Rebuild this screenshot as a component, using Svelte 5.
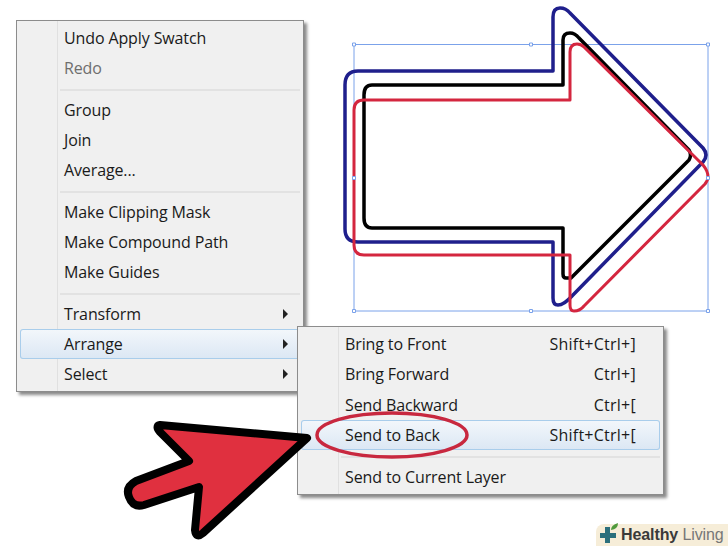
<script>
    const menu = [
        [{ label: 'Undo Apply Swatch' }, { label: 'Redo', off: true }],
        [{ label: 'Group' }, { label: 'Join' }, { label: 'Average...' }],
        [{ label: 'Make Clipping Mask' }, { label: 'Make Compound Path' }, { label: 'Make Guides' }],
        [{ label: 'Transform', sub: true }, { label: 'Arrange', sub: true, active: true }, { label: 'Select', sub: true }],
    ];

    const arrange = [
        [
            { label: 'Bring to Front', keys: 'Shift+Ctrl+]' },
            { label: 'Bring Forward', keys: 'Ctrl+]' },
            { label: 'Send Backward', keys: 'Ctrl+[' },
            { label: 'Send to Back', keys: 'Shift+Ctrl+[', active: true },
        ],
        [{ label: 'Send to Current Layer' }],
    ];

    const handles = [
        [354, 44.5], [531, 44.5], [708, 44.5],
        [354, 178], [708, 178],
        [354, 311], [531, 311], [708, 311],
    ];
</script>

{#snippet groups(list)}
    {#each list as group, g}
        {#if g > 0}
            <div class="sep"></div>
        {/if}
        {#each group as item}
            <div class="item" class:active={item.active} class:off={item.off}>
                <span>{item.label}</span>
                {#if item.keys}
                    <span class="keys">{item.keys}</span>
                {/if}
                {#if item.sub}
                    <i class="chevron"></i>
                {/if}
            </div>
        {/each}
    {/each}
{/snippet}

<main>
    <svg class="art" width="728" height="546" viewBox="0 0 728 546">
        <g fill="none" stroke-linejoin="round">
            <rect x="354" y="44.5" width="354" height="266.5" stroke="#7ba2ea" stroke-width="1" />

            <path class="blue" d="M345 85Q345 71 358 71L553 71L553 17Q553 8 560 8Q566 8 570 13L703 148Q709 155 703 162L572 296Q564 305 558 305Q553 305 553 298L553 242L358 242Q345 242 345 229Z" />
            <path class="black" d="M364 95Q364 85 372 85L563 85L563 40Q563 33 570 33Q575 33 579 38L689 150Q692 155 689 160L571 278L566 278Q563 278 563 274L563 228L372 228Q364 228 364 218Z" />
            <path class="red" d="M354 110Q354 100 364 100L570 100L570 52Q570 44 577 44Q581 44 584 47L703 165Q708 171 708 177Q708 180 705 184L584 306Q580 311 574 311Q570 311 570 305L570 255L364 255Q354 255 354 245Z" />

            {#each handles as [x, y]}
                <rect x={x - 1.5} y={y - 1.5} width="3" height="3" fill="#fff" stroke="#7ba2ea" stroke-width="1" />
            {/each}
        </g>
    </svg>

    <section class="menu main-menu">
        {@render groups(menu)}
    </section>

    <section class="menu sub-menu">
        {@render groups(arrange)}
    </section>

    <svg class="art" width="728" height="546" viewBox="0 0 728 546">
        <path d="M307 438L160 425Q155 426 160 432L189 461L136 481Q125 487 129 497Q133 508 144 505L199 487L195 530Q196 539 203 533Z" fill="#e0303f" stroke="#000" stroke-width="8" stroke-linejoin="round" />
        <ellipse cx="392" cy="435" rx="75" ry="22" fill="none" stroke="#c8283f" stroke-width="3.5" />
    </svg>

    <div class="brand">
        <svg width="22" height="22" viewBox="0 0 22 22">
            <path d="M6 3h5v6h6v5h-6v5H6v-5H1V9h5z" fill="#2b6f7c" />
            <path d="M12 6Q12 1 19 -1Q19 5 12 6Z" fill="#4f9a3c" />
        </svg>
        <span><b>Healthy</b> Living</span>
    </div>
</main>

<style>
    :global(body) {
        background: #fff;
    }

    main {
        position: relative;
        width: 728px;
        height: 546px;
        overflow: hidden;
        background: #fff;
        font-family: "Open Sans", sans-serif;
    }

    .art {
        position: absolute;
        left: 0;
        top: 0;
    }

    .blue {
        stroke: #1f1f8c;
        stroke-width: 3.5;
    }

    .black {
        stroke: #000;
        stroke-width: 3.5;
    }

    .red {
        stroke: #d4263f;
        stroke-width: 3;
    }

    .menu {
        position: absolute;
        box-sizing: border-box;
        padding: 2px 3px;
        background:
            linear-gradient(#e0e0e0, #e0e0e0) 40px 0 / 1px 100% no-repeat,
            #f0f0f0;
        border: 1px solid #8c8c8c;
        box-shadow: 3px 3px 3px #8a8a8a;
    }

    .main-menu {
        left: 16px;
        top: 20px;
        width: 288px;
        height: 372px;
    }

    .sub-menu {
        left: 297px;
        top: 326px;
        width: 367px;
        height: 169px;
    }

    .item {
        display: flex;
        align-items: center;
        justify-content: space-between;
        box-sizing: border-box;
        height: 30px;
        padding: 0 12px 0 44px;
        font-size: 16px;
        letter-spacing: -0.12px;
        color: #1a1a1a;
    }

    .sub-menu .item {
        height: 30.3px;
    }

    .off {
        color: #6e6e6e;
    }

    .active {
        background: linear-gradient(#f3f7fb, #dbe7f4);
        box-shadow: inset 0 0 0 1px #a9cdeb;
        border-radius: 3px;
    }

    .sep {
        height: 12px;
        margin-left: 40px;
        background: linear-gradient(#e2e2e2, #e2e2e2) 0 6px / 100% 2px no-repeat;
    }

    .keys {
        margin-right: 12px;
        letter-spacing: 0.25px;
    }

    .chevron {
        width: 0;
        height: 0;
        border-left: 5.5px solid #222;
        border-top: 5px solid transparent;
        border-bottom: 5px solid transparent;
    }

    .brand {
        position: absolute;
        left: 596px;
        top: 524px;
        width: 132px;
        height: 22px;
        display: flex;
        align-items: center;
        padding-left: 3px;
        box-sizing: border-box;
        background: #f6edd8;
        border-top-left-radius: 8px;
        font-family: "Liberation Sans", sans-serif;
        font-size: 16px;
        letter-spacing: -0.1px;
        color: #777;
        white-space: nowrap;
    }

    .brand svg {
        flex: none;
        overflow: visible;
    }

    .brand b {
        color: #3a3a3a;
    }
</style>
